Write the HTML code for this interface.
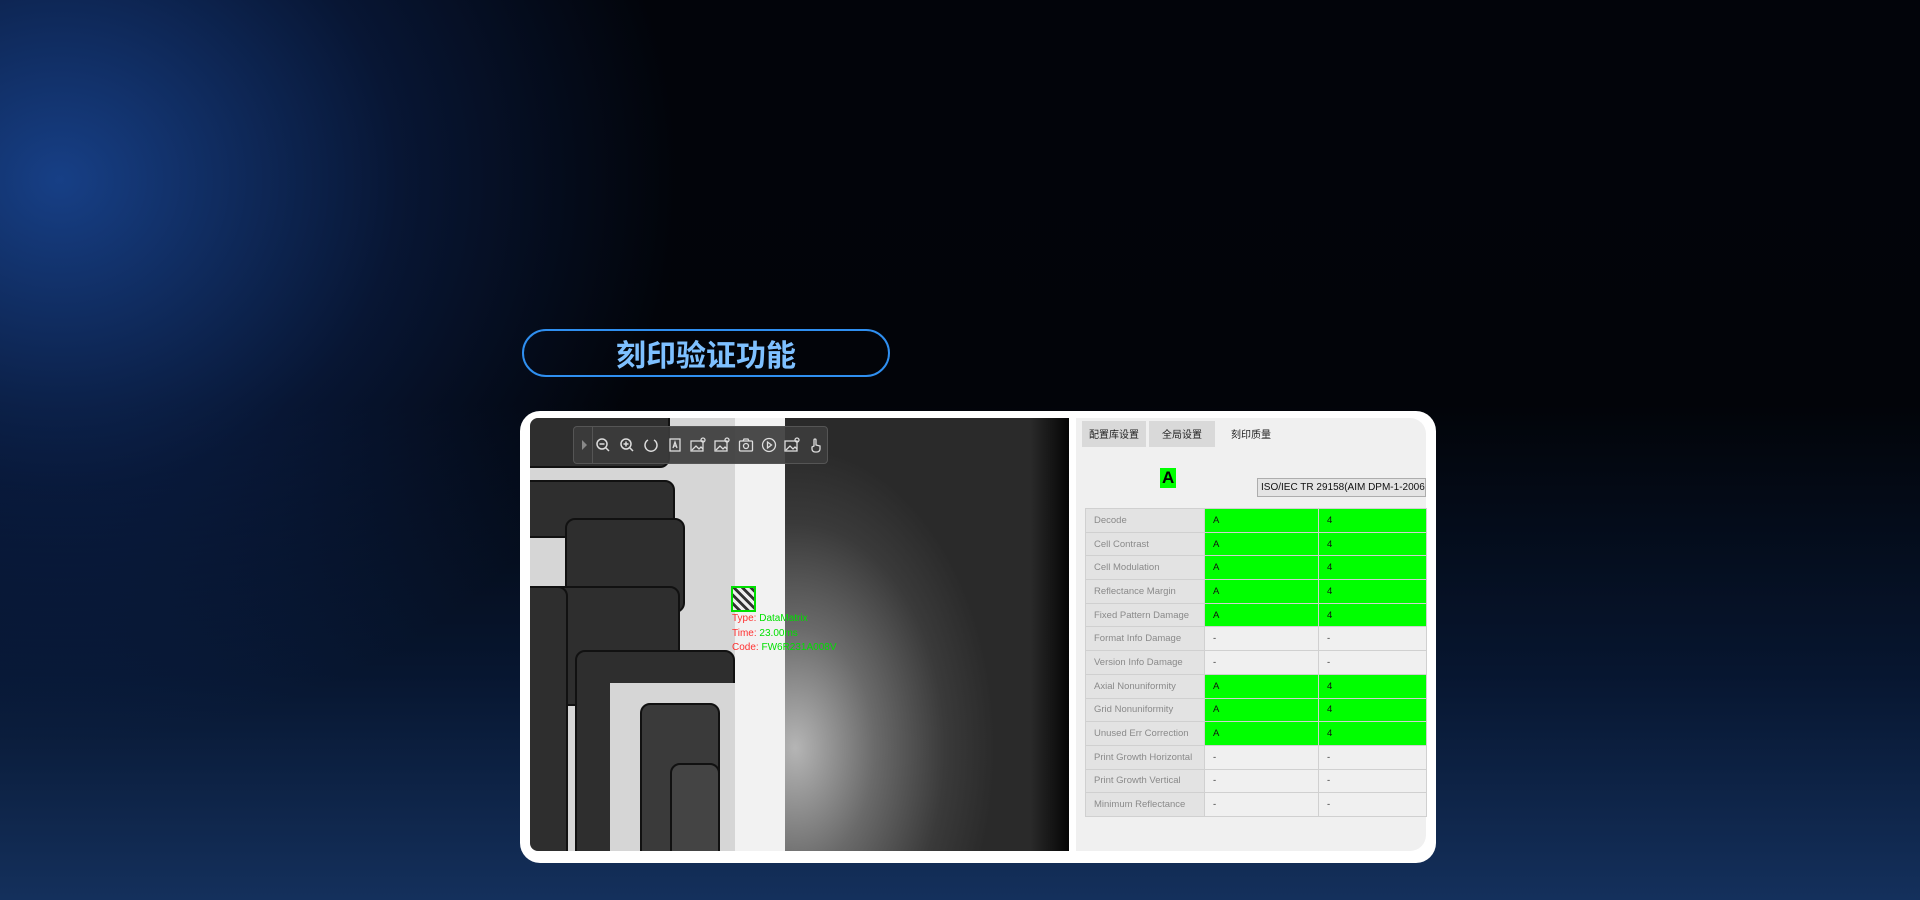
<!DOCTYPE html>
<html><head><meta charset="utf-8"><style>
*{margin:0;padding:0;box-sizing:border-box}
body{width:1920px;height:900px;overflow:hidden;position:relative;font-family:"Liberation Sans","Noto Sans CJK SC",sans-serif;
background:
radial-gradient(ellipse 620px 560px at 60px 180px, rgba(28,78,165,0.8), rgba(18,55,130,0.35) 55%, transparent 100%),
linear-gradient(180deg,#02040a 0%,#020409 45%,#071630 75%,#14305c 100%);}
.pill{position:absolute;left:522px;top:329px;width:368px;height:48px;border:2px solid #2f8ff0;border-radius:24px;
color:#7ec0ff;font:bold 30px "Noto Sans CJK SC",sans-serif;text-align:center;line-height:44px;letter-spacing:0px}
.card{position:absolute;left:520px;top:411px;width:916px;height:452px;background:#fff;border-radius:20px}
.img{position:absolute;left:530px;top:418px;width:539px;height:433px;overflow:hidden;border-radius:8px 0 0 8px;background:#d6d6d6}
.img .b{position:absolute;background:#2e2e2e;border:2px solid #111;border-radius:10px}
.panel{position:absolute;left:1076px;top:418px;width:350px;height:433px;background:#f0f0f0;border-radius:0 16px 16px 0}
.tab{position:absolute;top:3px;height:26px;background:#d9d9d9;font-size:10px;line-height:26px;text-align:center;color:#222;font-family:"Noto Sans CJK SC",sans-serif}
.bigA{position:absolute;left:1160px;top:468px;background:#00ff00;font:bold 17px "Liberation Sans",sans-serif;padding:0 2px;line-height:20px}
.sel{position:absolute;left:1257px;top:478px;width:169px;height:19px;background:#e4e4e4;border:1px solid #adadad;font-size:10px;line-height:17px;padding-left:3px;color:#111;white-space:nowrap;overflow:hidden}
table{position:absolute;left:1085px;top:508px;border-collapse:collapse;font-size:9.5px}
td{height:23.7px;border:1px solid #d0d0d0;padding-left:8px}
td:first-child{width:119px;background:#e3e3e3;color:#8a8a8a}
td:nth-child(2){width:114px}
td:nth-child(3){width:108px}
.g td:not(:first-child){background:#00ff00;color:#111}
.n td:not(:first-child){background:#f0f0f0;color:#333}
.tb{position:absolute;left:573px;top:426px;width:255px;height:38px;background:rgba(60,60,60,0.92);border:1px solid #555;border-radius:4px}
.tb svg{position:absolute;top:10px}
.ov{position:absolute;font-size:10px;line-height:14.5px}
</style></head><body>
<div class="pill">刻印验证功能</div>
<div class="card"></div>
<div class="img">
 <div class="b" style="left:-10px;top:-10px;width:150px;height:60px"></div>
 <div class="b" style="left:-10px;top:62px;width:155px;height:58px"></div>
 <div class="b" style="left:35px;top:100px;width:120px;height:95px"></div>
 <div class="b" style="left:-10px;top:168px;width:160px;height:120px"></div>
 <div class="b" style="left:-10px;top:168px;width:48px;height:280px"></div>
 <div class="b" style="left:45px;top:232px;width:160px;height:220px"></div>
 <div style="position:absolute;left:80px;top:265px;width:130px;height:170px;background:#d6d6d6"></div>
 <div class="b" style="left:110px;top:285px;width:80px;height:160px;background:#3a3a3a"></div>
 <div class="b" style="left:140px;top:345px;width:50px;height:100px;background:#444"></div>
 <div style="position:absolute;left:205px;top:0;width:50px;height:433px;background:#f2f2f2"></div>
 <div style="position:absolute;left:255px;top:0;width:284px;height:433px;background:radial-gradient(ellipse 200px 300px at 10px 330px,#b5b5b5,#6a6a6a 40%,#3a3a3a 75%,#2a2a2a 100%)"></div>
 <div style="position:absolute;left:500px;top:0;width:39px;height:433px;background:linear-gradient(90deg,rgba(20,20,20,0),#050505)"></div>
 <div style="position:absolute;left:201px;top:168px;width:25px;height:26px;border:2px solid #00e000;background:repeating-linear-gradient(45deg,#eee 0 3px,#333 3px 6px)"></div>
</div>
<div class="ov" style="left:732px;top:612px"><span style="color:#ff3030">Type: </span><span style="color:#00e000">DataMatrix</span><br><span style="color:#ff3030">Time: </span><span style="color:#00e000">23.00ms</span><br><span style="color:#ff3030">Code: </span><span style="color:#00e000">FW6R231A008V</span></div>
<div class="tb">
 <div style="position:absolute;left:8px;top:13px;border-left:5px solid #888;border-top:5px solid transparent;border-bottom:5px solid transparent"></div>
 <div style="position:absolute;left:18px;top:0;width:1px;height:36px;background:#555"></div>
 <svg style="left:21px" width="16" height="16" viewBox="0 0 16 16" fill="none" stroke="#ddd" stroke-width="1.5"><circle cx="7" cy="7" r="5"/><path d="M4.5 7h5M11 11l3 3"/></svg>
 <svg style="left:45px" width="16" height="16" viewBox="0 0 16 16" fill="none" stroke="#ddd" stroke-width="1.5"><circle cx="7" cy="7" r="5"/><path d="M4.5 7h5M7 4.5v5M11 11l3 3"/></svg>
 <svg style="left:69px" width="16" height="16" viewBox="0 0 16 16" fill="none" stroke="#ddd" stroke-width="1.5"><path d="M5 3a6 6 0 1 0 6 0"/></svg>
 <svg style="left:93px" width="16" height="16" viewBox="0 0 16 16" fill="none" stroke="#ddd" stroke-width="1.3"><rect x="3" y="2" width="10" height="12"/><path d="M6 11l2-6 2 6M6.8 9h2.4"/></svg>
 <svg style="left:116px" width="16" height="16" viewBox="0 0 16 16" fill="none" stroke="#ddd" stroke-width="1.3"><rect x="1" y="4" width="12" height="10"/><path d="M2 13l4-4 3 3 2-2 2 2"/><circle cx="13" cy="3" r="2"/></svg>
 <svg style="left:140px" width="16" height="16" viewBox="0 0 16 16" fill="none" stroke="#ddd" stroke-width="1.3"><rect x="1" y="4" width="12" height="10"/><path d="M2 13l4-4 3 3 2-2 2 2"/><circle cx="13" cy="3" r="2"/></svg>
 <svg style="left:164px" width="16" height="16" viewBox="0 0 16 16" fill="none" stroke="#ddd" stroke-width="1.3"><rect x="1.5" y="4" width="13" height="10" rx="1"/><path d="M5 4l1-2h4l1 2"/><circle cx="8" cy="9" r="2.5"/></svg>
 <svg style="left:187px" width="16" height="16" viewBox="0 0 16 16" fill="none" stroke="#ddd" stroke-width="1.3"><circle cx="8" cy="8" r="6.5"/><path d="M6.5 5v6l4-3z"/></svg>
 <svg style="left:210px" width="16" height="16" viewBox="0 0 16 16" fill="none" stroke="#ddd" stroke-width="1.3"><rect x="1" y="4" width="12" height="10"/><path d="M2 13l4-4 3 3 2-2 2 2"/><circle cx="13" cy="3" r="2"/></svg>
 <svg style="left:234px" width="16" height="16" viewBox="0 0 16 16" fill="none" stroke="#ddd" stroke-width="1.3"><path d="M6 9V3a1 1 0 0 1 2 0v5l4 1v3a3 3 0 0 1-3 3H7a3 3 0 0 1-3-3v-2z"/></svg>
</div>
<div class="panel">
 <div class="tab" style="left:6px;width:64px">配置库设置</div>
 <div class="tab" style="left:73px;width:66px">全局设置</div>
 <div class="tab" style="left:142px;width:66px;background:#f0f0f0">刻印质量</div>
</div>
<div class="bigA">A</div>
<div class="sel">ISO/IEC TR 29158(AIM DPM-1-2006 ⌵</div>
<table>
<tr class="g"><td>Decode</td><td>A</td><td>4</td></tr>
<tr class="g"><td>Cell Contrast</td><td>A</td><td>4</td></tr>
<tr class="g"><td>Cell Modulation</td><td>A</td><td>4</td></tr>
<tr class="g"><td>Reflectance Margin</td><td>A</td><td>4</td></tr>
<tr class="g"><td>Fixed Pattern Damage</td><td>A</td><td>4</td></tr>
<tr class="n"><td>Format Info Damage</td><td>-</td><td>-</td></tr>
<tr class="n"><td>Version Info Damage</td><td>-</td><td>-</td></tr>
<tr class="g"><td>Axial Nonuniformity</td><td>A</td><td>4</td></tr>
<tr class="g"><td>Grid Nonuniformity</td><td>A</td><td>4</td></tr>
<tr class="g"><td>Unused Err Correction</td><td>A</td><td>4</td></tr>
<tr class="n"><td>Print Growth Horizontal</td><td>-</td><td>-</td></tr>
<tr class="n"><td>Print Growth Vertical</td><td>-</td><td>-</td></tr>
<tr class="n"><td>Minimum Reflectance</td><td>-</td><td>-</td></tr>
</table>
</body></html>
